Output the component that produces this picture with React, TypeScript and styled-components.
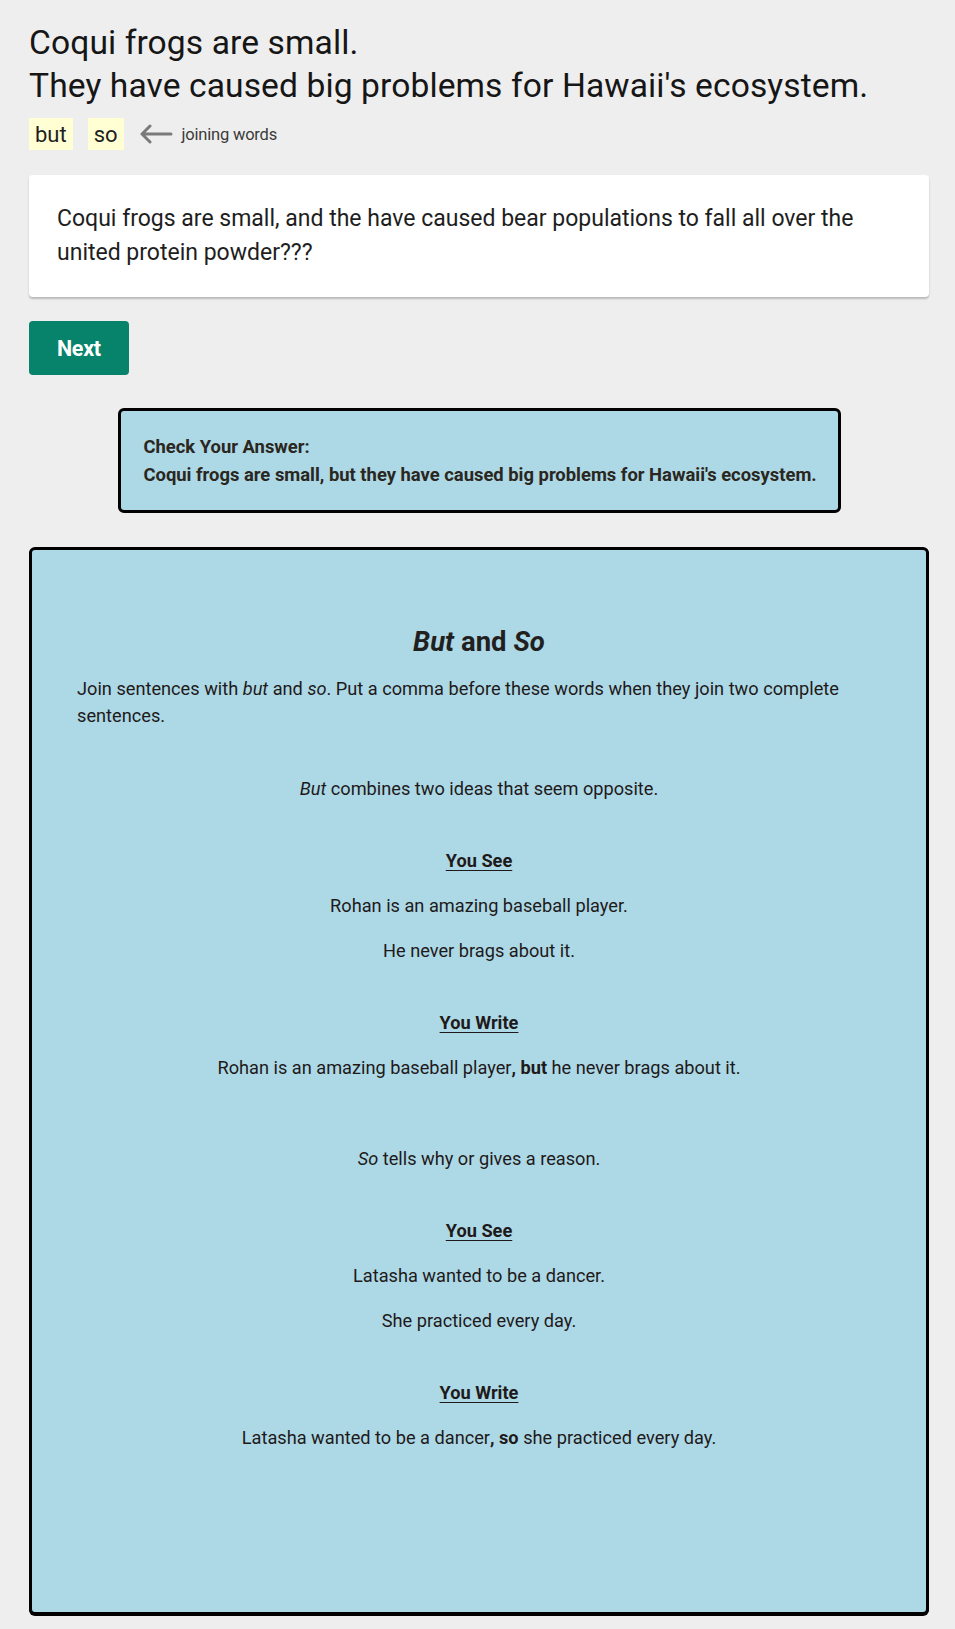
import React from "react";
import styled, { createGlobalStyle } from "styled-components";

const GlobalStyle = createGlobalStyle`
  html, body {
    margin: 0;
    padding: 0;
    background: #eeeeee;
  }
  body {
    font-family: Roboto, "Liberation Sans", Arial, sans-serif;
    color: #1e1e1e;
  }
  * { box-sizing: border-box; }
`;

const Page = styled.main`
  display: flex;
  flex-direction: column;
  padding: 21px 26px 13px 29px;
`;

const Prompt = styled.h1`
  margin: 0;
  font-size: 33.6px;
  font-weight: 400;
  line-height: 43px;
  color: #161616;
  letter-spacing: 0.1px;
`;

const JoinRow = styled.div`
  display: flex;
  align-items: center;
  margin-top: 11px;
  height: 32px;
`;

const Chip = styled.span`
  display: inline-flex;
  align-items: center;
  height: 32px;
  padding: 0 6px;
  margin-right: 15px;
  background: #ffffd3;
  font-size: 22px;
  color: #1e1e1e;
`;

const ArrowIcon = styled.svg`
  width: 34px;
  height: 20px;
  margin-right: 9px;
  flex: none;
`;

const Hint = styled.span`
  font-family: "Liberation Sans Narrow", Roboto, sans-serif;
  font-size: 16.5px;
  color: #3a3a3a;
  letter-spacing: -0.2px;
`;

const AnswerCard = styled.div`
  margin-top: 25px;
  background: #ffffff;
  border-radius: 4px;
  box-shadow: 0 2px 2px rgba(0, 0, 0, 0.22);
  padding: 27px 28px 27px 28px;
  font-size: 23px;
  line-height: 34px;
  color: #1e1e1e;
`;

const NextButton = styled.button`
  align-self: flex-start;
  margin-top: 24px;
  height: 54px;
  padding: 0 28px;
  border: none;
  border-radius: 4px;
  background: #06836a;
  color: #ffffff;
  font-family: Roboto, "Liberation Sans", sans-serif;
  font-weight: 700;
  font-size: 21.5px;
  letter-spacing: -0.3px;
  cursor: pointer;
`;

const CheckBox = styled.div`
  align-self: center;
  width: 723px;
  margin-top: 33px;
  background: #add8e6;
  border: 3px solid #000000;
  border-radius: 6px;
  padding: 22px 20px 21px 23px;
  font-weight: 700;
  font-size: 18.4px;
  line-height: 28px;
  color: #2a2620;
`;

const CheckLine = styled.div`
  white-space: nowrap;
`;

const Lesson = styled.section`
  margin-top: 34px;
  background: #add8e6;
  border: 3px solid #000000;
  border-radius: 6px;
  box-shadow: 0 1px 0 #000;
  padding: 72px 45px 161px 45px;
  display: flex;
  flex-direction: column;
  color: #1e1a1a;
  font-size: 18.2px;
  line-height: 27px;
`;

const LessonTitle = styled.h2`
  margin: 0;
  text-align: center;
  font-size: 27.5px;
  line-height: 40px;
  font-weight: 700;
  color: #221f1f;
`;

const Intro = styled.p`
  margin: 13px 0 0 0;
`;

const Rule = styled.div<{ $gap: number }>`
  display: flex;
  flex-direction: column;
  gap: 18px;
  margin-top: ${(p) => p.$gap}px;
  text-align: center;
`;

const Line = styled.p`
  margin: 0;
`;

const Label = styled.p`
  margin: 27px 0 0 0;
  font-weight: 700;
  text-decoration: underline;
  text-underline-offset: 3px;
`;

const Arrow = () => (
  <ArrowIcon viewBox="0 0 34 20" fill="none">
    <path
      d="M32 10H3M11 2L3 10L11 18"
      stroke="#7a7a7a"
      strokeWidth="3"
      strokeLinecap="round"
      strokeLinejoin="round"
    />
  </ArrowIcon>
);

export default function App() {
  return (
    <>
      <GlobalStyle />
      <Page>
        <Prompt>
          Coqui frogs are small.
          <br />
          They have caused big problems for Hawaii's ecosystem.
        </Prompt>
        <JoinRow>
          <Chip>but</Chip>
          <Chip>so</Chip>
          <Arrow />
          <Hint>joining words</Hint>
        </JoinRow>
        <AnswerCard>
          Coqui frogs are small, and the have caused bear populations to fall all
          over the united protein powder???
        </AnswerCard>
        <NextButton>Next</NextButton>
        <CheckBox>
          <CheckLine>Check Your Answer:</CheckLine>
          <CheckLine>
            Coqui frogs are small, but they have caused big problems for Hawaii's
            ecosystem.
          </CheckLine>
        </CheckBox>
        <Lesson>
          <LessonTitle>
            <em>But</em> and <em>So</em>
          </LessonTitle>
          <Intro>
            Join sentences with <em>but</em> and <em>so</em>. Put a comma before
            these words when they join two complete sentences.
          </Intro>
          <Rule $gap={46}>
            <Line>
              <em>But</em> combines two ideas that seem opposite.
            </Line>
            <Label>You See</Label>
            <Line>Rohan is an amazing baseball player.</Line>
            <Line>He never brags about it.</Line>
            <Label>You Write</Label>
            <Line>
              Rohan is an amazing baseball player<strong>, but</strong> he never
              brags about it.
            </Line>
          </Rule>
          <Rule $gap={64}>
            <Line>
              <em>So</em> tells why or gives a reason.
            </Line>
            <Label>You See</Label>
            <Line>Latasha wanted to be a dancer.</Line>
            <Line>She practiced every day.</Line>
            <Label>You Write</Label>
            <Line>
              Latasha wanted to be a dancer<strong>, so</strong> she practiced
              every day.
            </Line>
          </Rule>
        </Lesson>
      </Page>
    </>
  );
}
